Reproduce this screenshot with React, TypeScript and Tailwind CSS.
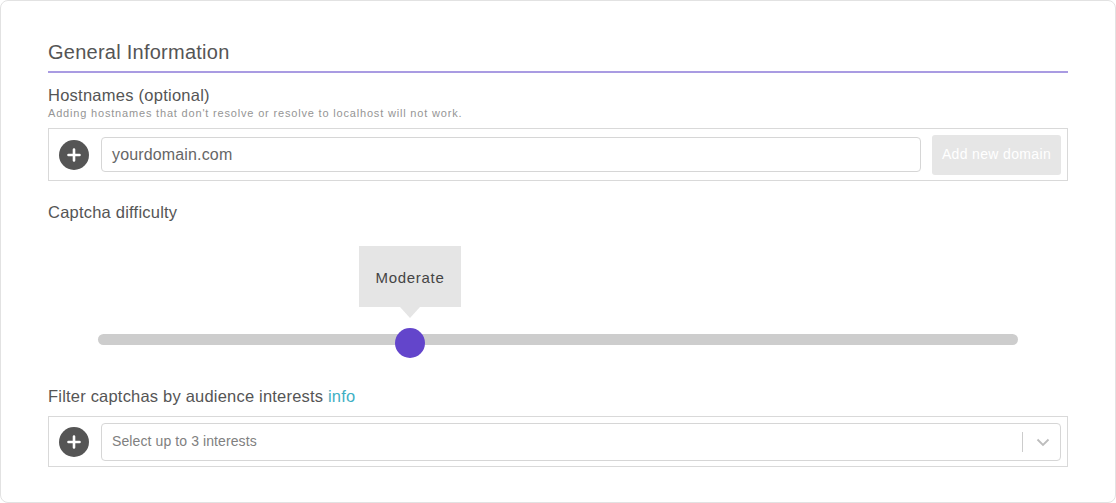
import React from "react";

function PlusCircle() {
  return (
    <div className="w-[30px] h-[30px] rounded-full bg-[#555555] flex items-center justify-center shrink-0">
      <svg width="16" height="16" viewBox="0 0 16 16">
        <path d="M8 2.5v11M2.5 8h11" stroke="#ffffff" strokeWidth="2.6" strokeLinecap="round" />
      </svg>
    </div>
  );
}

export default function App() {
  return (
    <div
      className="w-[1116px] h-[503px] bg-white border border-[#e2e2e2] rounded-[8px] box-border px-[47px] pt-[39px] text-[#555555]"
      style={{ fontFamily: '"Liberation Sans", Arial, sans-serif' }}
    >
      <h2 className="text-[20px] leading-[24px] pb-[7px] border-b-2 border-[#a99be2] text-[#555555] tracking-[0.25px]">
        General Information
      </h2>

      <div className="mt-[12px] text-[16.5px] leading-[20px] tracking-[0.25px]">Hostnames (optional)</div>
      <div className="mt-[1px] text-[11px] leading-[14px] text-[#959595] tracking-[0.82px]">
        Adding hostnames that don't resolve or resolve to localhost will not work.
      </div>

      <div className="mt-[8px] h-[53px] border border-[#d9d9d9] flex items-center pl-[10px] pr-[6px]">
        <PlusCircle />
        <div className="ml-[12px] h-[35px] flex-1 border border-[#d6d6d6] rounded-[4px] flex items-center px-[10px] text-[16px] text-[#666666] tracking-[0.15px]">
          yourdomain.com
        </div>
        <div className="ml-[11px] w-[129px] h-[40px] rounded-[3px] bg-[#e6e6e6] flex items-center justify-center text-[14px] text-white tracking-[0.35px]">
          Add new domain
        </div>
      </div>

      <div className="mt-[21px] text-[16.5px] leading-[20px] tracking-[0.22px]">Captcha difficulty</div>

      <div className="mx-[50px] pt-[112px]">
        <div className="relative h-[11px] rounded-full bg-[#cdcdcd]">
          <div className="absolute left-[297px] top-[-6px] w-[30px] h-[30px] rounded-full bg-[#6345cb]" />
          <div className="absolute left-[261px] top-[-88px] w-[102px] h-[61px] bg-[#e5e5e5] flex items-center justify-center pt-[3px] text-[15px] text-[#444444] tracking-[0.7px]">
            Moderate
          </div>
          <div className="absolute left-[302px] top-[-27px] w-0 h-0 border-l-[10px] border-r-[10px] border-t-[11px] border-l-transparent border-r-transparent border-t-[#e5e5e5]" />
        </div>
      </div>

      <div className="mt-[41px] text-[16.5px] leading-[20px] tracking-[0.2px]">
        Filter captchas by audience interests <span className="text-[#3fb0c4]">info</span>
      </div>

      <div className="mt-[10px] h-[51px] border border-[#d9d9d9] flex items-center pl-[10px] pr-[6px]">
        <PlusCircle />
        <div className="ml-[12px] h-[38px] flex-1 border border-[#d6d6d6] rounded-[4px] flex items-center pl-[10px] pr-[10px] text-[14px] text-[#808080] tracking-[0.1px]">
          <span className="flex-1">Select up to 3 interests</span>
          <div className="w-px h-[20px] bg-[#cccccc]" />
          <svg className="ml-[13px]" width="14" height="14" viewBox="0 0 14 14">
            <path d="M1.5 4.5l5.5 5.5 5.5-5.5" fill="none" stroke="#bdbdbd" strokeWidth="1.8" />
          </svg>
        </div>
      </div>
    </div>
  );
}
